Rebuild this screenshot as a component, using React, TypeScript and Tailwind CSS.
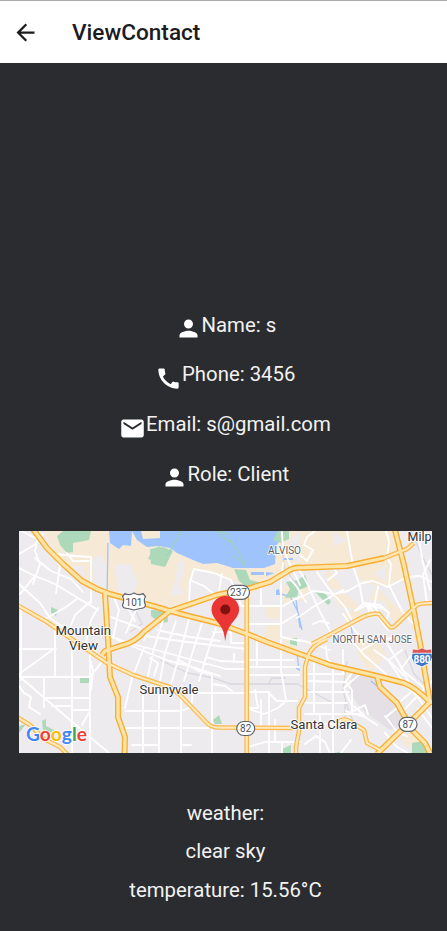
import React from "react";
import { MdArrowBack, MdCall, MdEmail, MdPerson } from "react-icons/md";

const highways = [
  "M33 529L47 548L63 564L82 581L97 589L110 594L160 608L170 611L193 617L217 623L250 635L267 642L300 654L330 665L377 676L404 683Q415 687 430 702L434 702",
  "M105 593L107 625L108 640L110 677L118 697L118 717L125 737L124.500 755",
  "M102 655L105 651L123 645Q134 643 145 631L170 611L217 595L250 588L270 582L288 571Q294 567 302 567.700L347 566L384 558",
  "M394.700 529L404 565L414 612L420 643L425 673L430 702L412 720L377 754",
  "M377 676L380 687L397 703L412 730L425 743L431 755",
];

const arterials = [
  "M17 605L47 622L73 640L107 663L133 675L160 684L170 687L180 695L208 724Q213 728 220 727.500L294 728",
  "M246.700 595V755",
  "M327 639Q312 645 308 656L305 667V697L299 708V731L296 747V755",
  "M312 644L331 634L357 620Q371 612 379 614L389 626Q392 629 396 625L417 605Q420 603 434 603",
  "M338 722Q345 717 351 722L364 730L367 743L380 750",
  "M384 558L407 549L414 543",
  "M17 717L30 725L44 739L60 747L68 755",
];

const streets = [
  "M21 531L42 541L55 554L76 556L91 557V603M19 554L34 545L43 534M39 531L35 551L40 564L33 584M19 568L35 576L55 584L78 598L98 610M35 558L51 571L71 579L83 592M55 554L60 566L56 593M67 553L73 561H91M19 584L40 603L50 618L66 629M34 577L25 588L20 594M91 601L75 615L68 632M98 608L91 620L86 642M78 598L66 607L45 619M113 595L119 610L113 638M124 600L135 621M137 608L126 633",
  "M19 649H56M19 677H90M21 607V680M19 676L77 726L109 753M19 674L55 648M55 631V677M44 677V707M72 645V753M90 650V753M44 698H90M52 706H72M72 710H90M90 711L82 725M19 686L24 693L31 697L29 707L40 714M90 659L93 671L91 690M90 677L101 663",
  "M109 636L132 644L160 651L226 669H247M111 617L140 628M118 640L146 652L169 661L190 666L220 676M146 636L180 641L219 646L247 649M144 648L132 678L125 708M150 625L144 640M163 620L153 652L148 676M176 621L165 653L160 681M189 619L180 653L171 684M202 623L192 654L184 681M216 628L206 657L199 681M157 630L190 637L220 641M150 658L158 663L154 676M206 657L220 661L247 662M179 660L199 671L212 675",
  "M143 691V753M159 691V753M181 697V753M212 677V753M125 711H181L191 707L193 693H247M125 728H208M132 745H159M181 745H191M212 693H247M212 684L225 686L232 691M213 632H231V643H247M234 654V662",
  "M247 660L294 660M247 667H299M247 692H269V753M247 675H299M257 640V665M281 640V670L286 700M255 690L258 708H248M270 694L277 701H297M246 708L264 714L278 708L286 701M261 700V727M248 747L265 742H300M282 742V753M275 720V742",
  "M189 605L190 582L194 569L214 573L231 580L237 595M192 581L204 586L220 599L225 610M222 574L219 591M238 596L241 606H283L299 597M261 586V605M282 532L283 547L288 560L300 585M283 563L281 582V637L300 641M249 624H281L297 614M290 579L297 587L306 602",
  "M315 531L307 537L304 545L313 550L307 561L298 553M347 531L353 566L360 587L363 604M386 531L389 542L387 558L391 564L389 585L402 611L417 628M418 534L423 563L430 590M430 560L423 575L427 603M297 599L313 591L322 592L334 594L348 591L362 583L373 581L388 587L407 577L420 576L432 582M328 580L337 573L331 565M297 566L307 583L318 608L331 633M317 572L328 588L345 607L353 623M297 618L313 607L325 600L343 590M378 587L374 606L379 614M366 604L375 613L388 630M343 614L359 636L363 645M313 624L320 621L329 623",
  "M355 611L364 603L380 605L389 613L386 622M355 611L367 605L384 609M366 604L371 615M299 640L308 642L330 650M314 658V713M326 646L327 658L333 666V721M343 650V674M305 674H344M305 681L346 682L352 690V713M307 692H349M305 703H347M305 714H360M320 716V753M333 721V753M346 711L365 717L377 725M353 711L365 705L368 714M352 673L346 681M361 673L344 688L351 704L364 715M352 641L364 655L386 674M362 650L378 640L392 638M374 650L388 660L401 679M385 640L399 663L410 685M402 650L389 660L403 675M413 653L401 669L424 688M396 705L416 688M404 710L432 681M386 717L397 708M401 681L418 697L432 718M385 733L397 747L408 753M351 740L341 753M305 744L316 736L325 742L330 753M313 724H348M385 716L398 733L407 736M418 709L432 728",
];

const parks = [
  "M57 536L63 531H91L89 540L73 543V552L67 553L60 545Z",
  "M148 559L153 549L160 546V563Z", "M150 549L163 547L173 551L165 567L151 564Z",
  "M234 569L246 570L250 580L262 583V586L248 588L239 581Z", "M151 610L167 611L168 622L160 623L151 616Z",
  "M278 531H289V539L280 543L273 540Z", "M51 607L58 610L56 616L51 613Z", "M80 678H89V683H80Z",
  "M286 582L298 580L305 575L309 586L299 590L297 597L285 598L290 589Z",
  "M315 592Q325 589 331 602L328 605Q321 598 315 592Z", "M213 720L219 715L222 724H215Z",
  "M282 749L291 745V753H283Z", "M412 743L423 741L428 753H412Z", "M42 721L46 719V726L54 730L50 733L43 730Z", "M19 726L26 724L19 733Z", "M290 638H297V646L290 644Z",
  "M335 753L339 752L343 753Z",
];

type LabelProps = { x: number; y: number; width: number; size?: number; children: string };

function PlaceLabel({ x, y, width, size = 12, children }: LabelProps) {
  return (
    <text x={x} y={y} textLength={width} lengthAdjust="spacingAndGlyphs" fontSize={size} fill={size < 12 ? "#5f6368" : "#333"} stroke="#fff" strokeOpacity=".8" strokeWidth="2" strokeLinejoin="round" paintOrder="stroke">
      {children}
    </text>
  );
}

function RouteBadge({ x, y, width, label }: { x: number; y: number; width: number; label: string }) {
  return (
    <g>
      <rect x={x - width / 2} y={y - 7} width={width} height="14" rx="7" fill="#fff" stroke="#62666a" strokeWidth="1.200" />
      <text x={x} y={y + 3.5} textAnchor="middle" fontSize="10" fill="#4d5156">{label}</text>
    </g>
  );
}

function ContactMap() {
  return (
    <svg viewBox="19 531 413 222" className="block h-[222px] w-[413px]" style={{ fontFamily: "Roboto, sans-serif" }} role="img" aria-label="Map">
      <rect x="19" y="531" width="413" height="222" fill="#eeebef" />
      <g fill="#f6ead6">
        <path d="M44 531H299L298 566L264 584L249 588L231 579L193 569L187 585V603L170 610L110 594L83 581L64 564L54 550Z" />
        <path d="M289 531H395L406 579L386 587L363 583L350 565L297 567L263 584V605H247V588Z" />
        <path d="M325 565L343 589L328 589Z M332 592L348 595L359 606L364 617L347 625L343 614L355 609L339 607Z M355 640L378 640L386 655L370 674L359 657Z M340 664L352 668L346 691Z M400 738L412 731L421 742L407 748Z M376 587L400 610L412 610L396 624L389 614L384 601L370 600Z" />
      </g>
      <g fill="#eeebef">
        <path d="M101 555L107 566L104 593L94 588L92 560Z M115 565L130 564L138 582L132 598L118 591L117 579Z M178 563L184 560L183 575L179 584L184 594L170 596L175 581Z M60 568L83 566L86 579L77 577Z M374 573L386 565L386 582Z M333 531L347 541L333 546Z M289 541L299 532V563L291 556Z M353 567H360L354 575Z" />
        <path d="M193 569L214 573L231 580L235 590L220 594L188 605Z M249 594L263 588L281 582L284 604L263 605H249Z M297 569L323 567L330 590L313 598L302 591Z M333 568L348 567L361 584L345 591Z" />
      </g>
      <path d="M266 605H282V617L274 620L265 615Z M266 625H281V641L264 638Z M283 584L291 588V603H283Z M300 588L311 586L305 603L300 600Z M283 638L297 637V651L286 648Z" fill="#f6ead6" />
      <path d="M352 673L361 672L377 677L388 694L408 723L390 730L365 712L349 693Z" fill="#e4e0e5" />
      <g fill="#9fc4fd">
        <path d="M109 531H132L131 546L123 545L119 549L110 543Z M132 531H141L143 539L160 538V531H283L276 548L275 564L264 568L250 568L233 568L217 563L203 564L193 560L177 553L170 548L159 546L147 547L137 540Z" />
        <path d="M251 572H264V575H251Z M266 572L275 573L266 576Z M284 558L293 558V560H284Z M276 590L279 589L280 595H276Z" />
        <path d="M108 543L107 594M280 594L290 596L298 612L302 630M297 653L299 670L296 668M350 617L353 639M296 600L300 628M371 681L377 686" fill="none" stroke="#9fc4fd" strokeWidth="1.300" />
      </g>
      <g fill="#add9ba">{parks.map((d) => <path key={d} d={d} />)}</g>
      <path d="M181 531L171 549L167 556M216 531L228 541L232 542L235 548L230 539M219 531L229 535L230 542M235 547L245 562V565L234 556" fill="none" stroke="#9cd3b6" strokeWidth="1.200" />
      <path d="M281 531L284 567L298 587M160 660L188 673L213 678L231 684H299M268 685L272 678H286M345 702V721M411 531L422 556L432 575M299 685L333 703M405 650L414 674L432 692M135 609L142 624L130 632M347 661L343 690L348 709L353 721" fill="none" stroke="#d7d7df" strokeWidth="1.300" />
      <g fill="none" stroke="#fff" strokeLinejoin="round" strokeLinecap="round">
        {streets.map((d) => <path key={d} d={d} strokeWidth="1.800" />)}
      </g>
      <g fill="none" strokeLinejoin="round">
        {arterials.map((d) => <path key={d} d={d} stroke="#fab84c" strokeWidth="4.600" />)}
        {highways.map((d) => <path key={d} d={d} stroke="#f8ad32" strokeWidth="6" />)}
        {arterials.map((d) => <path key={d} d={d} stroke="#fee9ba" strokeWidth="2.200" />)}
        {highways.map((d) => <path key={d} d={d} stroke="#fee5a7" strokeWidth="3.300" />)}
      </g>
      <path d="M125 593.500Q129 596 134 593Q139 596 143 593.500L145.500 596.500Q143 600 145.500 605Q145 608.500 140 608.500L134 610L128 608.500Q122.500 608.500 122.500 605Q125 600 122.500 596.500Z" fill="#fff" stroke="#62666a" strokeWidth="1.200" />
      <text x="134" y="605.500" textAnchor="middle" fontSize="10" fill="#4d5156">101</text>
      <RouteBadge x={238.500} y={592.300} width={22} label="237" />
      <RouteBadge x={245.700} y={728.500} width={18} label="82" />
      <RouteBadge x={408} y={724.300} width={18} label="87" />
      <path d="M412 653H432Q435 662 422 667Q409 663 412 653Z" fill="#3d77c6" stroke="#fff" strokeWidth="1" />
      <path d="M413 649Q418 651 422 648Q426 651 431 649L432 653H412Z" fill="#dc5353" stroke="#fff" strokeWidth=".5" />
      <text x="422" y="662.500" textAnchor="middle" fontSize="10" fontWeight="700" fill="#fff">880</text>
      <PlaceLabel x={55.500} y={634.500} width={55.500} size={12.500}>Mountain</PlaceLabel>
      <PlaceLabel x={69} y={650} width={29} size={12.500}>View</PlaceLabel>
      <PlaceLabel x={139.500} y={693.500} width={59} size={12.500}>Sunnyvale</PlaceLabel>
      <PlaceLabel x={290.500} y={729} width={67} size={12.500}>Santa Clara</PlaceLabel>
      <PlaceLabel x={407.500} y={540.500} width={24} size={12.500}>Milp</PlaceLabel>
      <PlaceLabel x={268} y={553.700} width={33} size={10}>ALVISO</PlaceLabel>
      <PlaceLabel x={332.500} y={642.500} width={79.500} size={10}>NORTH SAN JOSE</PlaceLabel>
      <path d="M225.300 641C224.600 638 224.600 632 220.500 626C216.500 620 211.500 616 211.500 609.500A13.800 13.400 0 0 1 239.100 609.500C239.100 616 234 620 230 626C226 632 226 638 225.300 641Z" fill="#ea3535" />
      <circle cx="225.300" cy="609.500" r="5" fill="#7f1111" />
      <text x="26" y="740.500" fontSize="19.500" fontFamily="Lato, sans-serif" fontWeight="700" textLength="61" lengthAdjust="spacingAndGlyphs" stroke="#fff" strokeWidth="1.500" paintOrder="stroke">
        <tspan fill="#4285f4">G</tspan><tspan fill="#ea4335">o</tspan><tspan fill="#fbbc05">o</tspan><tspan fill="#4285f4">g</tspan><tspan fill="#34a853">l</tspan><tspan fill="#ea4335">e</tspan>
      </text>
    </svg>
  );
}

const details = [
  { Icon: MdPerson, text: "Name: s", row: "pl-[174.5px]" },
  { Icon: MdCall, text: "Phone: 3456", row: "pl-[155px]" },
  { Icon: MdEmail, text: "Email: s@gmail.com", row: "pl-[119px]" },
  { Icon: MdPerson, text: "Role: Client", row: "pl-[160.5px]" },
];

export default function App() {
  return (
    <main className="flex h-[931px] w-[447px] flex-col overflow-hidden bg-[#2b2c30] font-['Roboto',sans-serif] text-[#f2f2f2]">
      <header className="flex h-[63px] shrink-0 items-center border-t border-[#aaa] bg-white pl-[12px] text-[#1c1c1e]">
        <MdArrowBack className="size-[27px]" />
        <h1 className="ml-[33px] pt-px text-[22.6px] leading-7 font-medium">ViewContact</h1>
      </header>
      <section className="flex shrink-0 flex-col pt-[237px]">
        {details.map(({ Icon, text, row }) => (
          <div key={text} className={`flex h-[49.8px] items-start ${row}`}>
            <div className="flex h-[57px] shrink-0 items-center text-white"><Icon className="size-[27px]" /></div>
            <p className="pt-[11.600px] text-[20.35px] leading-[26px] whitespace-nowrap">{text}</p>
          </div>
        ))}
      </section>
      <section className="mt-[31.800px] ml-[19px] h-[222px] shrink-0"><ContactMap /></section>
      <section className="mt-[40.800px] flex flex-col pl-[4px] text-center text-[20.35px] leading-[38.500px]">
        <p>weather:</p>
        <p>clear sky</p>
        <p>temperature: 15.56°C</p>
      </section>
    </main>
  );
}
